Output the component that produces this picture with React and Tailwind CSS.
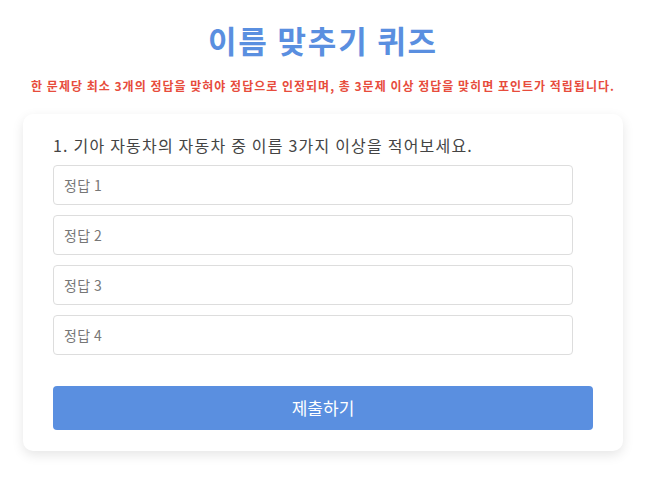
const answers = ['정답 1', '정답 2', '정답 3', '정답 4'];

export default function App() {
  return (
    <div className="min-h-screen bg-white font-['Noto_Sans_CJK_KR','Noto_Sans',sans-serif]">
      <div className="w-[646px] pt-5">
        {/* Header */}
        <h1 className="text-center text-[31px] font-bold leading-[40px] tracking-[1.8px] text-[#5a8fe0]">이름 맞추기 퀴즈</h1>
        <p className="mt-[17px] text-center text-[12px] font-bold leading-[18px] tracking-[1px] text-[#e74c3c]">
          한 문제당 최소 3개의 정답을 맞혀야 정답으로 인정되며, 총 3문제 이상 정답을 맞히면 포인트가 적립됩니다.
        </p>

        {/* Quiz card */}
        <div className="mx-auto mt-[19px] w-[600px] rounded-[10px] bg-white px-[30px] pb-[21px] pt-5 shadow-[0_4px_12px_rgba(0,0,0,0.1)]">
          <p className="mb-[9px] text-[16px] leading-[22px] tracking-[1.2px] text-[#444]">
            1. 기아 자동차의 자동차 중 이름 3가지 이상을 적어보세요.
          </p>
          <div className="flex flex-col gap-[10px]">
            {answers.map((a) => (
              <input
                key={a}
                type="text"
                placeholder={a}
                className="h-10 w-[520px] rounded-[4px] border border-[#ddd] px-[10px] text-[14px] tracking-[0.4px] text-[#333] outline-none placeholder:text-[#777]"
              />
            ))}
          </div>
          <button className="mt-[31px] h-11 w-full rounded-[4px] bg-[#5a8fe0] text-[17px] text-white">
            제출하기
          </button>
        </div>
      </div>
    </div>
  );
}
